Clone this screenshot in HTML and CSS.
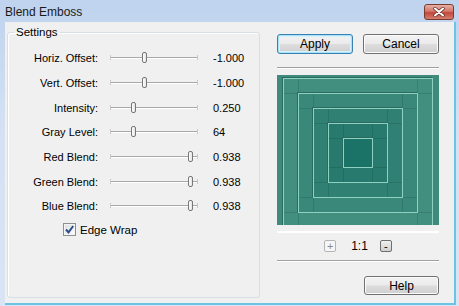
FILE: index.html
```html
<!DOCTYPE html>
<html lang="en">
<head>
    <meta charset="UTF-8">
    <title>Blend Emboss</title>
    <link rel="stylesheet" href="styles.css">
</head>
<body>
<div class="window">
    <div class="titlebar">
        <span class="title">Blend Emboss</span>
        <button class="close" type="button" aria-label="Close">
            <svg width="14" height="10" viewBox="0 0 14 10">
                <path d="M3 1.5 L11 8.5 M11 1.5 L3 8.5" stroke="#5a2a24" stroke-width="3.4" stroke-linecap="round"/>
                <path d="M3 1.5 L11 8.5 M11 1.5 L3 8.5" stroke="#ffffff" stroke-width="2" stroke-linecap="round"/>
            </svg>
        </button>
    </div>

    <div class="client">
        <fieldset class="settings">
            <legend>Settings</legend>

            <div class="row">
                <label>Horiz. Offset:</label>
                <div class="track"><span class="thumb" style="left:32px"></span></div>
                <span class="value">-1.000</span>
            </div>
            <div class="row">
                <label>Vert. Offset:</label>
                <div class="track"><span class="thumb" style="left:32px"></span></div>
                <span class="value">-1.000</span>
            </div>
            <div class="row">
                <label>Intensity:</label>
                <div class="track"><span class="thumb" style="left:21px"></span></div>
                <span class="value">0.250</span>
            </div>
            <div class="row">
                <label>Gray Level:</label>
                <div class="track"><span class="thumb" style="left:21px"></span></div>
                <span class="value">64</span>
            </div>
            <div class="row">
                <label>Red Blend:</label>
                <div class="track"><span class="thumb" style="left:78px"></span></div>
                <span class="value">0.938</span>
            </div>
            <div class="row">
                <label>Green Blend:</label>
                <div class="track"><span class="thumb" style="left:78px"></span></div>
                <span class="value">0.938</span>
            </div>
            <div class="row">
                <label>Blue Blend:</label>
                <div class="track"><span class="thumb" style="left:78px"></span></div>
                <span class="value">0.938</span>
            </div>

            <label class="check">
                <span class="box">
                    <svg width="11" height="11" viewBox="0 0 11 11">
                        <path d="M2 5.5 L4.5 8.3 L9.2 2" fill="none" stroke="#2b4c8c" stroke-width="2"/>
                    </svg>
                </span>
                Edge Wrap
            </label>
        </fieldset>

        <div class="side">
            <div class="buttons">
                <button class="btn default" type="button">Apply</button>
                <button class="btn" type="button">Cancel</button>
            </div>

            <div class="sep"></div>

            <div class="preview">
                <div class="sq sq1">
                    <div class="sq sq2">
                        <div class="sq sq3">
                            <div class="sq sq4">
                                <div class="sq sq5"></div>
                            </div>
                        </div>
                    </div>
                </div>
            </div>
            <div class="preview-base"></div>

            <div class="zoom">
                <button class="zbtn" type="button">+</button>
                <span class="ratio">1:1</span>
                <button class="zbtn dark" type="button">-</button>
            </div>

            <div class="sep"></div>

            <div class="help-row">
                <button class="btn" type="button">Help</button>
            </div>
        </div>
    </div>
</div>
</body>
</html>
```

FILE: styles.css
```css
body {
    margin: 0;
    font-family: "Liberation Sans", Arial, sans-serif;
    font-size: 11px;
    color: #000000;
}

.window {
    width: 459px;
    height: 306px;
    background: linear-gradient(#bfd3ee, #d3e1f3 40%, #d9e5f4);
    overflow: hidden;
}

/* title bar */
.titlebar {
    height: 22px;
    display: flex;
    align-items: center;
    justify-content: space-between;
    padding: 0 5px 0 5px;
    box-sizing: border-box;
}

.title {
    font-size: 12px;
    color: #1a1a1a;
    padding-top: 1px;
}

.close {
    width: 30px;
    height: 16px;
    margin-top: 1px;
    padding: 0;
    border: 1px solid #7a3a30;
    border-radius: 3px;
    background: linear-gradient(#e8b0a6, #d3776a 45%, #c4473a 55%, #d5806f);
    display: flex;
    align-items: center;
    justify-content: center;
}

/* client area */
.client {
    margin-left: 5px;
    width: 449px;
    height: 281px;
    background-color: #f0f0f0;
    border-right: 2px solid #6cc3e4;
    border-bottom: 2px solid #6cc3e4;
    display: flex;
    align-items: flex-start;
}

.settings {
    margin: 4px 0 0 2px;
    width: 253px;
    height: 272px;
    box-sizing: border-box;
    padding: 8px 0 0 6px;
    border: 1px solid #d5dfe5;
    border-radius: 3px;
    box-shadow: inset 1px 1px 0 #ffffff;
}

.settings legend {
    padding: 0 2px;
    line-height: 12px;
    font-size: 11.5px;
}

.row {
    display: flex;
    align-items: center;
    height: 24.67px;
}

.row label {
    width: 84px;
    text-align: right;
}

.track {
    position: relative;
    margin-left: 12px;
    width: 88px;
    height: 1px;
    background-color: #a8a8a8;
    border-bottom: 1px solid #ffffff;
}

.track::before,
.track::after {
    content: "";
    position: absolute;
    top: -2px;
    width: 1px;
    height: 5px;
    background-color: #c8c8c8;
}

.track::before {
    left: 0;
}

.track::after {
    right: 0;
}

.thumb {
    position: absolute;
    top: -5px;
    width: 3px;
    height: 9px;
    border: 1px solid #777777;
    border-radius: 2px;
    background: linear-gradient(90deg, #ffffff, #e4e4e4);
}

.value {
    margin-left: 15px;
}

.check {
    display: flex;
    align-items: center;
    height: 22px;
    margin-left: 49px;
    font-size: 11.5px;
}

.box {
    width: 11px;
    height: 11px;
    margin-right: 4px;
    border: 1px solid #8e8f8f;
    background: linear-gradient(135deg, #dcdcdc, #ffffff);
    box-shadow: inset 0 0 0 1px #f4f4f4;
    display: flex;
}

/* right column */
.side {
    margin-left: 17px;
    padding-top: 12px;
    width: 162px;
    display: flex;
    flex-direction: column;
}

.buttons {
    display: flex;
    justify-content: space-between;
}

.btn {
    width: 76px;
    height: 20px;
    padding: 0;
    font-family: "Liberation Sans", Arial, sans-serif;
    font-size: 12px;
    color: #000000;
    border: 1px solid #707070;
    border-radius: 3px;
    background: linear-gradient(#f2f2f2, #ebebeb 48%, #dddddd 52%, #cfcfcf);
    box-shadow: inset 0 0 0 1px #fcfcfc;
}

.btn.default {
    border-color: #3c7fb1;
    box-shadow: inset 0 0 0 1px #a6e2f8, inset 0 0 0 2px #d8f1fa;
}

.sep {
    margin-top: 13px;
    height: 1px;
    background-color: #a0a0a0;
    border-bottom: 1px solid #ffffff;
}

.preview {
    margin-top: 6px;
    height: 150px;
    background-color: #3f8a7b;
    display: flex;
    justify-content: center;
    align-items: flex-start;
    padding-top: 3px;
    box-sizing: border-box;
    overflow: hidden;
}

/* each ring is split into corner tiles by faint lines */
.sq {
    --line: rgba(0, 45, 35, 0.16);
    flex: none;
    box-sizing: border-box;
    padding: 14px;
    border: 1px solid #8ed1c0;
    box-shadow: -1px -1px 0 #2b6b5f;
    background-image:
        linear-gradient(90deg, transparent 14px, var(--line) 14px 15px, transparent 15px calc(100% - 15px), var(--line) calc(100% - 15px) calc(100% - 14px), transparent calc(100% - 14px)),
        linear-gradient(0deg, transparent 14px, var(--line) 14px 15px, transparent 15px calc(100% - 15px), var(--line) calc(100% - 15px) calc(100% - 14px), transparent calc(100% - 14px));
}

.sq1 {
    width: 150px;
    height: 150px;
    background-color: #428e7f;
}

.sq2 {
    width: 120px;
    height: 120px;
    background-color: #3a887a;
}

.sq3 {
    width: 90px;
    height: 90px;
    background-color: #308173;
}

.sq4 {
    width: 60px;
    height: 60px;
    background-color: #277a6d;
}

.sq5 {
    width: 30px;
    height: 30px;
    background-color: #1b7267;
    background-image: none;
}

.preview-base {
    margin-top: 6px;
    height: 2px;
    background-color: #ffffff;
}

.zoom {
    margin-top: 7px;
    display: flex;
    justify-content: center;
    align-items: center;
    height: 12px;
}

.zbtn {
    width: 12px;
    height: 12px;
    padding: 0;
    font-family: "Liberation Sans", Arial, sans-serif;
    font-size: 11px;
    line-height: 9px;
    color: #8a8a8a;
    border: 1px solid #b4b4b4;
    border-radius: 2px;
    background: #f6f6f6;
}

.zbtn.dark {
    color: #000000;
    border-color: #707070;
    background: linear-gradient(#efefef, #cfcfcf);
}

.ratio {
    font-size: 12px;
    margin: 0 12px 0 15px;
}

.zoom + .sep {
    margin-top: 8px;
}

.help-row {
    margin-top: 14px;
    display: flex;
    justify-content: flex-end;
}

.help-row .btn {
    width: 75px;
    height: 19px;
}
```
